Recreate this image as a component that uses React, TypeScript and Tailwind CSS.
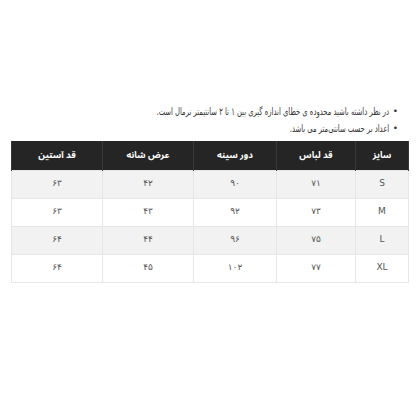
const rows = [
  ["S", "۷۱", "۹۰", "۴۲", "۶۳"],
  ["M", "۷۳", "۹۲", "۴۳", "۶۳"],
  ["L", "۷۵", "۹۶", "۴۴", "۶۴"],
  ["XL", "۷۷", "۱۰۲", "۴۵", "۶۴"],
];

const heads = ["سایز", "قد لباس", "دور سینه", "عرض شانه", "قد آستین"];
const widths = ["w-[53px]", "w-[79px]", "w-[83px]", "w-[91px]", "w-[91px]"];

export default function App() {
  return (
    <div
      dir="rtl"
      className="w-[420px] h-[420px] bg-white pt-[103px] font-['DejaVu_Sans',sans-serif]"
    >
      <ul className="pr-[22px] text-[10px] leading-[17px] text-[#333]">
        <li className="flex items-center gap-[4px]">
          <span className="text-[9px]">•</span>
          <span className="origin-right scale-x-[0.68] whitespace-nowrap">
            در نظر داشته باشید محدوده ی خطای اندازه گیری بین ۱ تا ۲ سانتیمتر نرمال است.
          </span>
        </li>
        <li className="flex items-center gap-[4px]">
          <span className="text-[9px]">•</span>
          <span className="origin-right scale-x-[0.68] whitespace-nowrap">اعداد بر حسب سانتی‌متر می باشد.</span>
        </li>
      </ul>
      <table className="mt-[4px] mr-[11px] w-[397px] table-fixed border-collapse text-[9px]">
        <thead>
          <tr className="h-[29px] bg-[#252525] text-white font-['Noto_Sans_Arabic','DejaVu_Sans',sans-serif]">
            {heads.map((h, i) => (
              <th key={h} className={`${widths[i]} border-x border-[#3a3a3a] font-bold`}>
                {h}
              </th>
            ))}
          </tr>
        </thead>
        <tbody>
          {rows.map((r, ri) => (
            <tr key={r[0]} className={`h-[28px] ${ri % 2 === 0 ? "bg-[#f2f2f2]" : "bg-white"}`}>
              {r.map((c, ci) => (
                <td key={ci} className="border border-[#e6e6e6] text-center text-[#555]">
                  {c}
                </td>
              ))}
            </tr>
          ))}
        </tbody>
      </table>
    </div>
  );
}
